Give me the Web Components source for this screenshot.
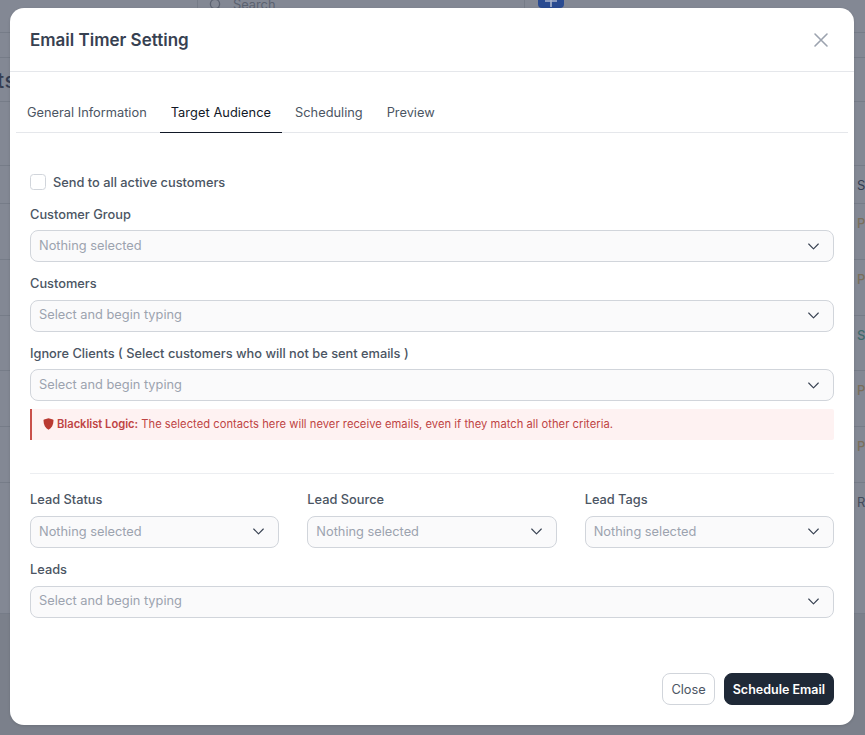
<!DOCTYPE html>
<html lang="en"><head><meta charset="utf-8"><title>Email Timer Setting</title>
<style>
html,body{margin:0;padding:0;height:735px;overflow:hidden;font-family:Inter,"Liberation Sans",sans-serif;background:#7b808b}
</style></head><body>
<bg-page>
  <bg-row h="43" class="top"><bg-search slot="center"></bg-search></bg-row>
  <bg-row h="25"></bg-row>
  <bg-row h="44" left="ts"></bg-row>
  <bg-row h="64"></bg-row>
  <bg-row h="38" right="S" color="#343d52"></bg-row>
  <bg-row h="56" right="P" color="#7a6f5c" bold="1"></bg-row>
  <bg-row h="56" right="P" color="#7a6f5c" bold="1"></bg-row>
  <bg-row h="55" right="S" color="#3f6a6c" bold="1"></bg-row>
  <bg-row h="56" right="P" color="#7a6f5c" bold="1"></bg-row>
  <bg-row h="56" right="P" color="#7a6f5c" bold="1"></bg-row>
  <bg-row h="131" right="R" color="#454c5c"></bg-row>
</bg-page>
<x-modal heading="Email Timer Setting">
  <x-tabs slot="tabs">
    <x-tab>General Information</x-tab>
    <x-tab active>Target Audience</x-tab>
    <x-tab>Scheduling</x-tab>
    <x-tab>Preview</x-tab>
  </x-tabs>
  <x-check>Send to all active customers</x-check>
  <x-field label="Customer Group" placeholder="Nothing selected"></x-field>
  <x-field label="Customers" placeholder="Select and begin typing"></x-field>
  <x-field label="Ignore Clients ( Select customers who will not be sent emails )" placeholder="Select and begin typing"></x-field>
  <x-alert><b>Blacklist Logic:</b> The selected contacts here will never receive emails, even if they match all other criteria.</x-alert>
  <x-rule></x-rule>
  <x-cols>
    <x-field label="Lead Status" placeholder="Nothing selected"></x-field>
    <x-field label="Lead Source" placeholder="Nothing selected"></x-field>
    <x-field label="Lead Tags" placeholder="Nothing selected"></x-field>
  </x-cols>
  <x-field label="Leads" placeholder="Select and begin typing"></x-field>
  <x-btn slot="footer">Close</x-btn>
  <x-btn slot="footer" primary>Schedule Email</x-btn>
</x-modal>
<script>
const def=(name,css,html,init)=>customElements.define(name,class extends HTMLElement{
  constructor(){super();this.attachShadow({mode:'open'}).innerHTML='<style>'+css+'</style>'+(typeof html==='function'?'':html);}
  connectedCallback(){if(typeof html==='function'&&!this._r){this._r=1;this.shadowRoot.innerHTML+=html(this);}if(init)init(this);}
});
def('bg-page',':host{display:flex;flex-direction:column;margin-top:-10px;background:#838894}','<slot></slot>');
def('bg-row',':host{display:flex;box-sizing:border-box;border-bottom:1px solid #767c88;align-items:center;justify-content:space-between;overflow:hidden}'+
  '.l{font-size:21px;font-weight:500;color:#343d52;margin-left:-3px;letter-spacing:.5px;position:relative;top:1px}.r{font-size:13px;margin-left:auto;width:8px;flex:none;overflow:hidden;align-self:flex-start;margin-top:11px;line-height:16px}',
  h=>{h.style.height=h.getAttribute('h')+'px';
    const l=h.getAttribute('left'),r=h.getAttribute('right'),c=h.getAttribute('color'),b=h.getAttribute('bold');
    return (l?'<span class="l">'+l+'</span>':'')+'<slot name="center"></slot>'+(r?'<span class="r" style="color:'+c+';font-weight:'+(b?500:400)+'">'+r+'</span>':'');});
def('bg-search',':host{display:flex;height:43px;margin-left:197px;align-items:flex-start}'+
  '.box{width:328px;box-sizing:border-box;height:30px;border-right:1px solid #767c88;border-left:1px solid #767c88;padding:7px 0 0 11px;display:flex;gap:11px;color:#5b6270;font-size:12.8px;line-height:16px;margin-top:0;background:#838894}'+
  'svg{flex:none;margin-top:1px}.plus{width:26px;height:18px;margin-left:13px;background:#2a4b91;border-radius:0 0 4px 4px;display:flex;justify-content:center;align-items:flex-start;padding-top:5px;box-sizing:border-box;}',
  '<div class="box"><svg width="13" height="13" viewBox="0 0 13 13" fill="none" stroke="#5b6270" stroke-width="1.3"><circle cx="6" cy="6" r="4.6"/><path d="M9.5 9.5 12 12"/></svg><span>Search</span></div><div class="plus"><svg width="12" height="12" viewBox="0 0 12 12" stroke="#a9b4cb" stroke-width="1.6" style="margin:0"><path d="M6 0v12M0 6h12"/></svg></div>');
def('x-modal',':host{position:absolute;left:10px;top:8px;width:844px;height:717px;background:#fff;border-radius:14px;display:flex;flex-direction:column;overflow:hidden;color:#374151;box-shadow:0 1px 3px rgba(0,0,0,.12)}'+
  'header{height:64px;flex:none;box-sizing:border-box;border-bottom:1px solid #e5e7eb;display:flex;align-items:center;justify-content:space-between;padding:0 25px 0 20px}'+
  'h2{margin:0;font-size:17px;font-weight:600;color:#374151;line-height:24px}'+
  'svg{display:block}'+
  '.tabs{padding:21px 6px 0}'+
  '.body{padding:41px 20px 0;flex:1;display:flex;flex-direction:column}'+
  'footer{display:flex;justify-content:flex-end;gap:9px;padding:0 20px 20px}',
  h=>'<header><h2>'+h.getAttribute('heading')+'</h2><svg width="16" height="16" viewBox="0 0 16 16" fill="none" stroke="#9ca3af" stroke-width="1.6" stroke-linecap="round"><path d="M2 2l12 12M14 2 2 14"/></svg></header><div class="tabs"><slot name="tabs"></slot></div><div class="body"><slot></slot></div><footer><slot name="footer"></slot></footer>');
def('x-tabs',':host{display:flex;gap:2px;border-bottom:1px solid #e5e7eb;height:40px;box-sizing:border-box}','<slot></slot>');
def('x-tab',':host{display:flex;align-items:center;padding:0 11px;font-size:12.8px;color:#4b5563;height:40px;box-sizing:border-box;padding-bottom:1px}:host([active]){color:#111827;border-bottom:1px solid #111827;letter-spacing:.07px}','<slot></slot>');
def('x-check',':host{display:flex;align-items:center;gap:7px;font-size:12.8px;font-weight:500;color:#4b5563;height:16px;margin-bottom:14.6px}'+
  'i{width:16px;height:16px;box-sizing:border-box;border:1px solid #d1d5db;border-radius:3.5px;background:#fff;flex:none}','<i></i><span><slot></slot></span>');
def('x-field',':host{display:block;margin-bottom:12px;min-width:0}label{display:block;font-size:12.8px;font-weight:500;line-height:20.8px;color:#4b5563;margin-bottom:4.8px}'+
  '.s{height:32px;box-sizing:border-box;border:1px solid #d1d5db;border-radius:8px;background:#fafafb;display:flex;align-items:center;justify-content:space-between;padding:0 14px 0 8px;font-size:12.8px;color:#9ca3af}.s span{position:relative;top:-.85px}svg{flex:none}',
  h=>'<label>'+h.getAttribute('label')+'</label><div class="s"><span>'+h.getAttribute('placeholder')+'</span><svg width="11" height="7" viewBox="0 0 11 7" fill="none" stroke="#374151" stroke-width="1.1" stroke-linecap="round" stroke-linejoin="round"><path d="M.7 1 5.5 5.9 10.3 1"/></svg></div>');
def('x-alert',':host{display:flex;align-items:center;gap:3px;height:31px;box-sizing:border-box;margin:-4.2px 0 0;border-left:2px solid #c9504a;background:#fef2f2;padding:0 0 1px 11px;font-size:11.2px;color:#bf4444;border-radius:0 2px 2px 0;letter-spacing:.03px}'+
  'svg{flex:none}::slotted(b){font-weight:600;letter-spacing:-.03px}',
  '<svg width="11" height="12" viewBox="0 0 11 12"><path fill="#b93a32" d="M5.5 0.3 9.9 1.6C10.3 1.7 10.5 2 10.5 2.4 10.5 6.8 8.6 10 5.5 11.7 2.4 10 .5 6.8 .5 2.4 .5 2 .7 1.7 1.1 1.6Z"/></svg><span><slot></slot></span>');
def('x-rule',':host{display:block;height:1px;background:#eceef1;margin:33px 0 16.2px}','');
def('x-cols',':host{display:grid;grid-template-columns:repeat(3,1fr);gap:28px}','<slot></slot>');
def('x-btn',':host{display:flex;align-items:center;height:32px;box-sizing:border-box;padding:0 8px;border:1px solid #d1d5db;border-radius:8px;background:#fff;color:#4b5563;font-size:12.8px}:host([primary]){background:#1f2937;border-color:#1f2937;color:#fff;font-weight:600;font-size:12.5px}','<slot></slot>');
</script>
</body></html>
